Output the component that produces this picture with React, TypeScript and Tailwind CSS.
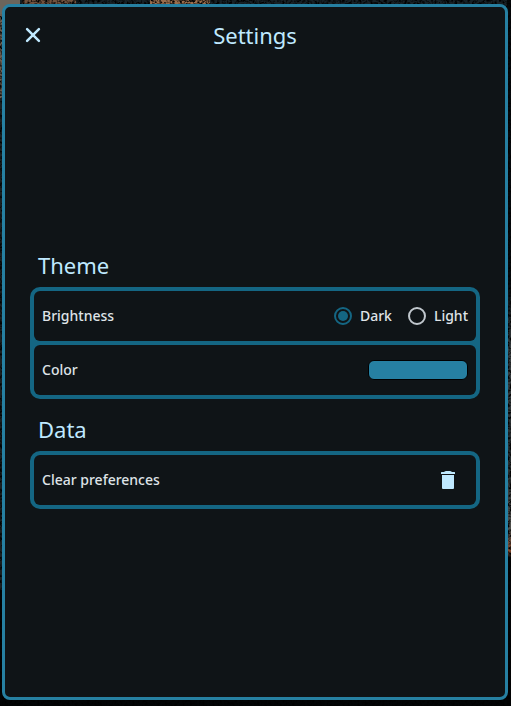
import { useState, type ReactNode } from "react";

function Backdrop() {
  return (
    <svg aria-hidden="true" className="absolute inset-0 h-full w-full" preserveAspectRatio="none" viewBox="0 0 511 706">
      <defs>
        <filter id="grain" x="0" y="0" width="100%" height="100%">
          <feTurbulence type="fractalNoise" baseFrequency="0.4" numOctaves="2" seed="4" />
          <feColorMatrix values="0 0 0 0 0  0 0 0 0 0  0 0 0 0 0  3 0 0 0 -1.2" />
        </filter>
        <linearGradient id="right" x1="0" y1="0" x2="0" y2="1">
          <stop offset="0" stopColor="#05090b" />
          <stop offset="0.4" stopColor="#04090c" />
          <stop offset="0.5" stopColor="#3a4042" />
          <stop offset="0.65" stopColor="#252b2d" />
          <stop offset="0.75" stopColor="#50504c" />
          <stop offset="0.78" stopColor="#84492c" />
          <stop offset="0.79" stopColor="#020304" />
        </linearGradient>
      </defs>
      <rect width="511" height="706" fill="#020405" />
      <rect width="511" height="6" fill="#172126" />
      <rect x="22" width="54" height="6" fill="#70513d" />
      <rect x="150" width="60" height="6" fill="#9a6d4c" />
      <rect y="14" width="4" height="84" fill="#6c5d50" />
      <rect y="98" width="3" height="492" fill="#1a2022" />
      <rect x="507" width="4" height="706" fill="url(#right)" />
      <rect width="511" height="706" filter="url(#grain)" />
      <rect width="20" height="14" fill="#6b655c" />
    </svg>
  );
}

function CloseIcon() {
  return (
    <svg aria-hidden="true" viewBox="0 0 24 24" className="size-6" fill="none" stroke="currentColor" strokeWidth="2.5" strokeLinecap="round">
      <path d="M6.1 6.1 17.9 17.9M17.9 6.1 6.1 17.9" />
    </svg>
  );
}

function TrashIcon() {
  return (
    <svg aria-hidden="true" viewBox="0 0 24 24" className="size-6" fill="currentColor">
      <path d="M6 7h12v13a1 1 0 0 1-1 1H7a1 1 0 0 1-1-1V7Z" />
      <path d="M5.5 4H8c.6-.7 1.4-1 2.3-1h3.4c.9 0 1.7.3 2.3 1h2.5a.5.5 0 0 1 .5.5V6H5V4.500a.5.5 0 0 1 .5-.5Z" />
    </svg>
  );
}

function Section({ title, children }: { title: string; children: ReactNode }) {
  return (
    <section>
      <h2 className="mb-2 px-2 text-[22px] leading-7 font-normal text-[#bfe9ff]">{title}</h2>
      <div className="flex flex-col gap-1 rounded-[10px] bg-[#146683] p-1">{children}</div>
    </section>
  );
}

function Row({ label, children }: { label: string; children: ReactNode }) {
  return (
    <div className="flex h-[50px] items-center justify-between rounded-md bg-[#0f1417] px-2">
      <span>{label}</span>
      {children}
    </div>
  );
}

function BrightnessOption({ label, checked, onChange }: { label: string; checked: boolean; onChange: () => void }) {
  return (
    <label className="flex items-center gap-2">
      <input
        type="radio"
        name="brightness"
        checked={checked}
        onChange={onChange}
        className="size-[18px] appearance-none rounded-full border-2 border-[#c0c7cd] checked:border-[#146683] checked:bg-[#146683] checked:bg-clip-content checked:p-0.5"
      />
      {label}
    </label>
  );
}

export default function App() {
  const [brightness, setBrightness] = useState("Dark");
  return (
    <div className="relative flex min-h-screen bg-black pt-1 pr-[3px] pb-1.5 pl-0.5 font-['Noto_Sans',sans-serif] text-sm font-medium text-[#dfe3e7]">
      <Backdrop />
      <main className="relative flex flex-1 flex-col rounded-lg border-3 border-[#2680a2] bg-[#0f1417]">
        <header className="grid h-14 grid-cols-[24px_1fr_24px] items-center px-4">
          <button aria-label="Close" className="text-[#bfe9ff]">
            <CloseIcon />
          </button>
          <h1 className="text-center text-[22px] leading-7 font-normal text-[#bfe9ff]">Settings</h1>
        </header>
        <div className="flex flex-1 flex-col justify-center gap-4 px-[25px]">
          <Section title="Theme">
            <Row label="Brightness">
              <div role="radiogroup" aria-label="Brightness" className="flex gap-4">
                {["Dark", "Light"].map((name) => (
                  <BrightnessOption
                    key={name}
                    label={name}
                    checked={brightness === name}
                    onChange={() => setBrightness(name)}
                  />
                ))}
              </div>
            </Row>
            <Row label="Color">
              <button aria-label="Color" className="h-5 w-[100px] rounded-md border border-black bg-[#2680a2]" />
            </Row>
          </Section>
          <Section title="Data">
            <Row label="Clear preferences">
              <button aria-label="Clear preferences" className="flex size-10 items-center justify-center text-[#bfe9ff]">
                <TrashIcon />
              </button>
            </Row>
          </Section>
        </div>
      </main>
    </div>
  );
}
